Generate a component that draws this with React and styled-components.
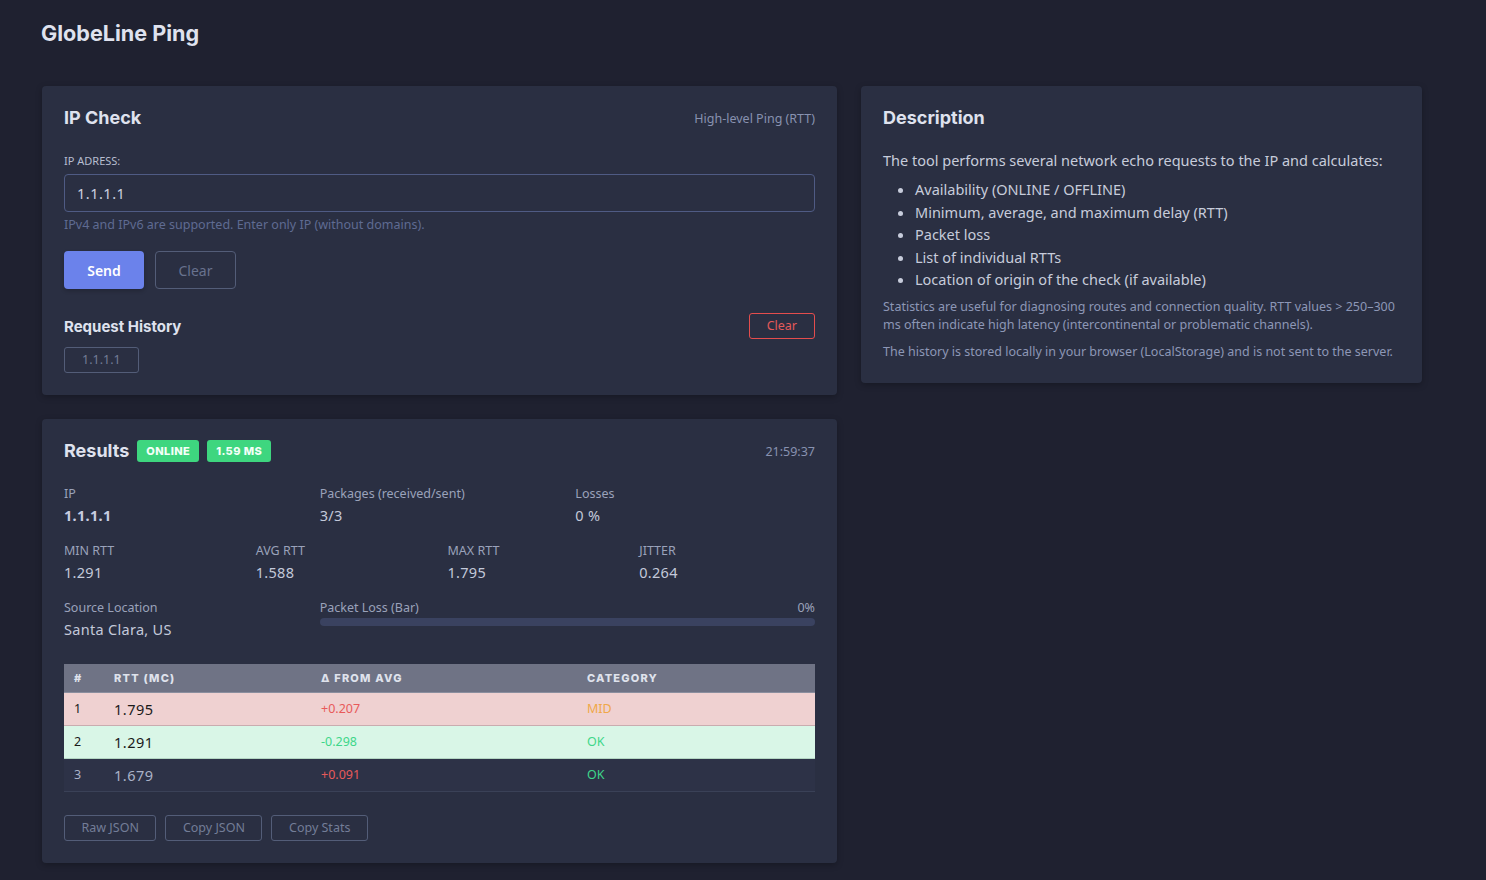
import React from 'react'
import styled, { createGlobalStyle } from 'styled-components'

const Global = createGlobalStyle`
  html, body { margin: 0; padding: 0; background: #1f2130; }
  body { font-family: "Noto Sans", "Open Sans", sans-serif; color: #d4d8e4; }
  * { box-sizing: border-box; }
`

const rows = [
  { n: 1, rtt: '1.795', delta: '+0.207', cat: 'MID', kind: 'bad' },
  { n: 2, rtt: '1.291', delta: '-0.298', cat: 'OK', kind: 'good' },
  { n: 3, rtt: '1.679', delta: '+0.091', cat: 'OK', kind: 'plain' },
]

function App() {
  return (
    <Page>
      <Global />
      <Title>GlobeLine Ping</Title>
      <Grid>
        <Column>
          <Card>
            <CardHead>
              <CardTitle>IP Check</CardTitle>
              <Muted>High-level Ping (RTT)</Muted>
            </CardHead>
            <Label>IP ADRESS:</Label>
            <Input defaultValue="1.1.1.1" />
            <Hint>IPv4 and IPv6 are supported. Enter only IP (without domains).</Hint>
            <BtnRow>
              <PrimaryBtn>Send</PrimaryBtn>
              <GhostBtn>Clear</GhostBtn>
            </BtnRow>
            <HistoryHead>
              <SubTitle>Request History</SubTitle>
              <SmallBtn $danger>Clear</SmallBtn>
            </HistoryHead>
            <SmallBtn>1.1.1.1</SmallBtn>
          </Card>

          <Card>
            <CardHead>
              <ResultsTitle>
                <CardTitle>Results</CardTitle>
                <Badge>ONLINE</Badge>
                <Badge>1.59 MS</Badge>
              </ResultsTitle>
              <Muted>21:59:37</Muted>
            </CardHead>
            <Stats $cols={3} $first>
              <Stat>
                <StatLabel>IP</StatLabel>
                <StatValue $bold>1.1.1.1</StatValue>
              </Stat>
              <Stat>
                <StatLabel>Packages (received/sent)</StatLabel>
                <StatValue>3/3</StatValue>
              </Stat>
              <Stat>
                <StatLabel>Losses</StatLabel>
                <StatValue>0 %</StatValue>
              </Stat>
            </Stats>
            <Stats $cols={4}>
              <Stat>
                <StatLabel>MIN RTT</StatLabel>
                <StatValue>1.291</StatValue>
              </Stat>
              <Stat>
                <StatLabel>AVG RTT</StatLabel>
                <StatValue>1.588</StatValue>
              </Stat>
              <Stat>
                <StatLabel>MAX RTT</StatLabel>
                <StatValue>1.795</StatValue>
              </Stat>
              <Stat>
                <StatLabel>JITTER</StatLabel>
                <StatValue>0.264</StatValue>
              </Stat>
            </Stats>
            <Stats $cols={3}>
              <Stat>
                <StatLabel>Source Location</StatLabel>
                <StatValue>Santa Clara, US</StatValue>
              </Stat>
              <LossCell>
                <LossHead>
                  <StatLabel>Packet Loss (Bar)</StatLabel>
                  <StatLabel>0%</StatLabel>
                </LossHead>
                <Bar>
                  <BarFill style={{ width: '0%' }} />
                </Bar>
              </LossCell>
            </Stats>

            <Table>
              <thead>
                <tr>
                  <Th style={{ width: 40 }}>#</Th>
                  <Th style={{ width: 207 }}>RTT (MC)</Th>
                  <Th style={{ width: 266 }}>Δ FROM AVG</Th>
                  <Th>CATEGORY</Th>
                </tr>
              </thead>
              <tbody>
                {rows.map((r) => (
                  <Tr key={r.n} $kind={r.kind}>
                    <Td $small>{r.n}</Td>
                    <Td $big>{r.rtt}</Td>
                    <Td $color={r.delta.startsWith('+') ? '#e85a5a' : '#3ed68a'} $small>{r.delta}</Td>
                    <Td $color={r.cat === 'MID' ? '#f0a848' : '#3ed68a'} $small>{r.cat}</Td>
                  </Tr>
                ))}
              </tbody>
            </Table>

            <Actions>
              <SmallBtn $wide>Raw JSON</SmallBtn>
              <SmallBtn $wide>Copy JSON</SmallBtn>
              <SmallBtn $wide>Copy Stats</SmallBtn>
            </Actions>
          </Card>
        </Column>

        <Card>
          <CardTitle>Description</CardTitle>
          <Para>The tool performs several network echo requests to the IP and calculates:</Para>
          <List>
            <li>Availability (ONLINE / OFFLINE)</li>
            <li>Minimum, average, and maximum delay (RTT)</li>
            <li>Packet loss</li>
            <li>List of individual RTTs</li>
            <li>Location of origin of the check (if available)</li>
          </List>
          <Note>
            Statistics are useful for diagnosing routes and connection quality. RTT values &gt; 250–300 ms often
            indicate high latency (intercontinental or problematic channels).
          </Note>
          <Note>The history is stored locally in your browser (LocalStorage) and is not sent to the server.</Note>
        </Card>
      </Grid>
    </Page>
  )
}

export default App

const Page = styled.div`
  padding: 18px 42px;
  min-height: 880px;
`

const Title = styled.h1`
  margin: 0 0 38px -1px;
  font-family: Inter, sans-serif;
  font-size: 21.6px;
  font-weight: 700;
  color: #dfe2ee;
  line-height: 30px;
`

const Grid = styled.div`
  display: grid;
  grid-template-columns: 795px 561px;
  gap: 24px;
  align-items: start;
`

const Column = styled.div`
  display: flex;
  flex-direction: column;
  gap: 24px;
`

const Card = styled.div`
  background: #2a2f42;
  border-radius: 4px;
  padding: 21px 22px 22px 22px;
  box-shadow: 0 2px 6px rgba(0, 0, 0, 0.25);
`

const CardHead = styled.div`
  display: flex;
  justify-content: space-between;
  align-items: center;
`

const CardTitle = styled.h2`
  margin: 0;
  font-family: Inter, sans-serif;
  font-size: 18px;
  font-weight: 700;
  color: #dfe2ee;
  line-height: 22px;
`

const ResultsTitle = styled.div`
  display: flex;
  align-items: center;
  gap: 8px;
`

const Badge = styled.span`
  background: #3ed67f;
  color: #f4fff8;
  font-family: Inter, sans-serif;
  font-weight: 800;
  font-size: 11px;
  padding: 0 9px;
  height: 22px;
  line-height: 22px;
  border-radius: 3px;
  letter-spacing: 0.4px;
`

const Muted = styled.span`
  font-size: 12.5px;
  color: #8892b0;
`

const Label = styled.div`
  margin-top: 25px;
  font-size: 11px;
  color: #b7bdcf;
  line-height: 14px;
`

const Input = styled.input`
  display: block;
  width: 100%;
  margin-top: 6px;
  height: 38px;
  padding: 0 12px;
  background: transparent;
  border: 1px solid #4f5b84;
  border-radius: 4px;
  font-family: "Noto Sans", sans-serif;
  font-size: 14.5px;
  color: #cdd2e0;
  outline: none;
  letter-spacing: 0.5px;
`

const Hint = styled.div`
  margin-top: 5px;
  font-size: 12.5px;
  color: #5f6b92;
  line-height: 16px;
`

const BtnRow = styled.div`
  display: flex;
  gap: 11px;
  margin-top: 18px;
`

const PrimaryBtn = styled.button`
  width: 80px;
  height: 38px;
  border: none;
  border-radius: 4px;
  background: #6b82eb;
  color: #fff;
  font-family: "Noto Sans", sans-serif;
  font-size: 14px;
  font-weight: 600;
  box-shadow: 0 2px 4px rgba(0, 0, 0, 0.2);
`

const GhostBtn = styled.button`
  width: 81px;
  height: 38px;
  border: 1px solid #535d78;
  border-radius: 4px;
  background: transparent;
  color: #68728e;
  font-family: "Noto Sans", sans-serif;
  font-size: 14px;
`

const HistoryHead = styled.div`
  display: flex;
  justify-content: space-between;
  align-items: center;
  margin-top: 24px;
  margin-bottom: 8px;
`

const SubTitle = styled.h3`
  margin: 0;
  font-family: Inter, sans-serif;
  font-size: 15px;
  font-weight: 700;
  color: #dfe2ee;
`

const SmallBtn = styled.button`
  height: 26px;
  padding: 0 ${(p) => (p.$wide ? '16.5px' : '17px')};
  border: 1px solid ${(p) => (p.$danger ? '#e44d4d' : '#535d78')};
  border-radius: 3px;
  background: transparent;
  color: ${(p) => (p.$danger ? '#e45a5a' : '#737d97')};
  font-family: "Noto Sans", sans-serif;
  font-size: 12.5px;
  line-height: 24px;
`

const Stats = styled.div`
  display: grid;
  grid-template-columns: repeat(${(p) => p.$cols}, 1fr);
  gap: 16px;
  margin-top: ${(p) => (p.$first ? '24px' : '18px')};
`

const Stat = styled.div`
  display: flex;
  flex-direction: column;
  gap: 3px;
`

const StatLabel = styled.span`
  font-size: 12.5px;
  color: #9aa2ba;
  line-height: 16px;
`

const StatValue = styled.span`
  font-size: 14.5px;
  color: ${(p) => (p.$bold ? '#c8cde0' : '#c3c9da')};
  font-weight: ${(p) => (p.$bold ? 700 : 400)};
  line-height: 20px;
  letter-spacing: 0.3px;
`

const LossCell = styled.div`
  grid-column: span 2;
`

const LossHead = styled.div`
  display: flex;
  justify-content: space-between;
`

const Bar = styled.div`
  margin-top: 2px;
  height: 8px;
  border-radius: 4px;
  background: #3a4260;
  overflow: hidden;
`

const BarFill = styled.div`
  height: 100%;
  background: #e45a5a;
`

const Table = styled.table`
  width: 100%;
  margin-top: 25px;
  border-collapse: collapse;
`

const Th = styled.th`
  text-align: left;
  background: #6f7385;
  color: #dfe2ec;
  font-family: Inter, sans-serif;
  font-size: 11px;
  font-weight: 800;
  letter-spacing: 1.2px;
  height: 28px;
  padding: 0 10px;
  border-bottom: 1px solid #8a8e9e;
`

const rowBg = { bad: '#efd1d1', good: '#d9f6e7', plain: '#2d3247' }
const rowLine = { bad: '#c9acaf', good: '#b4d6c3', plain: '#3a4157' }
const rowText = { bad: '#1a1a1a', good: '#1a1a1a', plain: '#aab2c8' }

const Tr = styled.tr`
  background: ${(p) => rowBg[p.$kind]};
  color: ${(p) => rowText[p.$kind]};
  border-bottom: 1px solid ${(p) => rowLine[p.$kind]};
`

const Td = styled.td`
  height: 33px;
  padding: 0 10px;
  font-size: ${(p) => (p.$big ? '14.5px' : '12.5px')};
  color: ${(p) => p.$color || 'inherit'};
  letter-spacing: ${(p) => (p.$big ? '0.5px' : '0')};
`

const Actions = styled.div`
  display: flex;
  gap: 9px;
  margin-top: 23px;
`

const Para = styled.p`
  margin: 20px 0 0;
  font-size: 14.5px;
  color: #c7ccdb;
  line-height: 22px;
`

const List = styled.ul`
  margin: 7px 0 7px;
  padding-left: 32px;
  font-size: 14.5px;
  color: #c7ccdb;
  line-height: 22.5px;
`

const Note = styled.p`
  margin: 0 0 9px;
  font-size: 12.5px;
  color: #8d97b6;
  line-height: 18px;
  &:last-child { margin-bottom: 0; }
`
